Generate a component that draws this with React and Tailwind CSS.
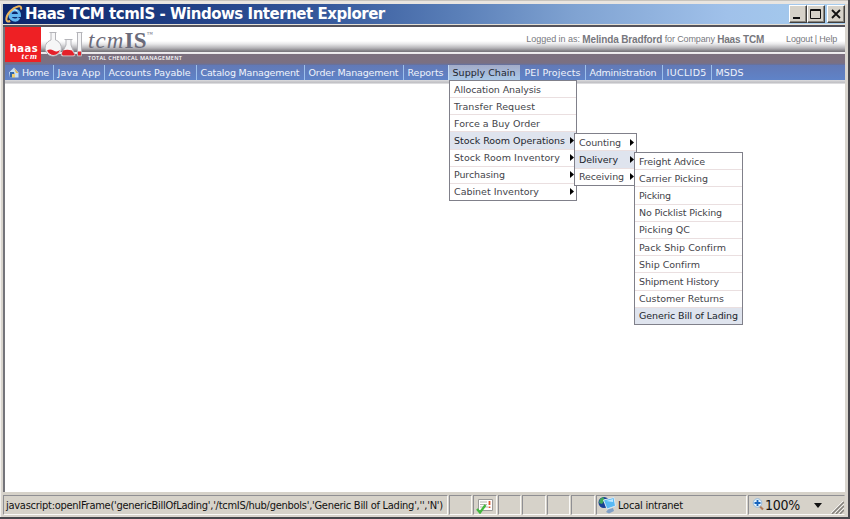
import { useLayoutEffect, useRef } from "react";

// Single-line label whose letter spacing is computed so that it fills a given width.
function Fit({ w, className = "", children }) {
  const ref = useRef(null);
  useLayoutEffect(() => {
    const el = ref.current;
    el.style.letterSpacing = "0px";
    const natural = el.getBoundingClientRect().width;
    el.style.letterSpacing = (w - natural) / (el.textContent.length - 0.5) + "px";
  }, [w]);
  return (
    <span ref={ref} className={"inline-block shrink-0 whitespace-pre " + className}>
      {children}
    </span>
  );
}

const nav = [
  ["Java App", 43, "w-[51px]"],
  ["Accounts Payable", 82, "w-[92px]"],
  ["Catalog Management", 99, "w-[108px]"],
  ["Order Management", 90, "w-[99px]"],
  ["Reports", 36, "w-[45px]"],
  ["Supply Chain", 63, "w-[72px]"],
  ["PEI Projects", 56, "w-[65px]"],
  ["Administration", 67, "w-[77px]"],
  ["IUCLID5", 40, "w-[49px]"],
  ["MSDS", 28, "w-[60px]"],
];

const menu = [
  ["Allocation Analysis", 87],
  ["Transfer Request", 81],
  ["Force a Buy Order", 86],
  ["Stock Room Operations", 111, true, true],
  ["Stock Room Inventory", 106, true],
  ["Purchasing", 51, true],
  ["Cabinet Inventory", 85, true],
];
const stock = [
  ["Counting", 42, true],
  ["Delivery", 39, true, true],
  ["Receiving", 45, true],
];
const delivery = [
  ["Freight Advice", 66],
  ["Carrier Picking", 69],
  ["Picking", 32],
  ["No Picklist Picking", 83],
  ["Picking QC", 51],
  ["Pack Ship Confirm", 87],
  ["Ship Confirm", 61],
  ["Shipment History", 80],
  ["Customer Returns", 85],
  ["Generic Bill of Lading", 99, false, true],
];

function Menu({ items, className }) {
  return (
    <div className={"absolute flex flex-col border border-[#80808a] bg-white " + className}>
      {items.map(([t, w, arrow, on], i) => (
        <div
          key={t}
          className={
            "flex min-h-0 flex-1 items-center justify-between pl-1 pr-[2px] text-[9.5px] leading-[16px] " +
            (i < items.length - 1 ? "border-b border-[#eadfe0] " : "") +
            (on ? "bg-[#dfe4ee] text-[#22242c]" : "text-[#44444a]")
          }
        >
          <Fit w={w} className="pt-[1px]">{t}</Fit>
          {arrow && (
            <svg className="h-[7px] w-[4px] shrink-0" viewBox="0 0 4 7">
              <path d="M0 0L4 3.5L0 7Z" fill="#000" />
            </svg>
          )}
        </div>
      ))}
    </div>
  );
}

const bevel =
  "flex h-[18px] shrink-0 items-center border border-t-[#fff] border-l-[#fff] border-r-[#404040] border-b-[#404040] bg-[#d6d2c9] shadow-[inset_-1px_-1px_0_#8a867e] ";
const pane =
  "flex h-[20px] shrink-0 items-center border border-t-[#8f8f93] border-l-[#8f8f93] border-r-[#faf9f7] border-b-[#faf9f7] ";

function TitleBar() {
  return (
    <div className="flex h-[20px] items-center bg-[linear-gradient(90deg,#0c266b_0%,#1c3a80_18%,#35589b_38%,#5a7fb8_54%,#80a3d2_68%,#a0c1ea_86%,#a6cdee_100%)]">
      <svg className="ml-[2px] h-[19px] w-[18px]" viewBox="0 0 18 19">
        <path d="M5 10.5H14.5C14.8 4 6.2 3 5 9.5C4.5 15 11.5 17 14 12.8" fill="none" stroke="#62b5ee" strokeWidth="3" />
        <path d="M7 5.4Q10 3.5 12.5 6" fill="none" stroke="#c8edff" strokeWidth="1" />
        <path d="M16 4.5C17.5-.8 10 1 5 6.5C0 12 .2 18.6 5.2 16" fill="none" stroke="#eeb65c" strokeWidth="2" />
      </svg>
      <Fit w={360} className="ml-[2px] font-['DejaVu_Sans',sans-serif] text-[15px] font-bold leading-[20px] text-white">
        Haas TCM tcmIS - Windows Internet Explorer
      </Fit>
      <div className="ml-auto flex">
        <div className={bevel + "w-[18px]"}>
          <svg viewBox="0 0 16 16" className="h-4 w-4"><path d="M3 12h7" stroke="#111" strokeWidth="2" /></svg>
        </div>
        <div className={bevel + "w-[18px]"}>
          <svg viewBox="0 0 16 16" className="h-4 w-4"><path d="M2.5 3.5h10v9h-10zM2.5 4.5h10" fill="none" stroke="#111" /></svg>
        </div>
        <div className={bevel + "ml-[2px] w-[18px]"}>
          <svg viewBox="0 0 16 16" className="h-4 w-4"><path d="M4 4L12 12M12 4L4 12" stroke="#111" strokeWidth="1.8" /></svg>
        </div>
      </div>
    </div>
  );
}

function Flasks() {
  return (
    <svg className="mt-[4px] h-[30px] w-[38px] shrink-0" viewBox="0 0 38 30">
      <g fill="#f6f6f7" stroke="#b4b4b9" strokeWidth="1">
        <path d="M4.500 1.500h7M6 1.500V9C1 11 -.5 15 .5 19C1.500 23 5 25 8 25S15 23 16.200 19C17 14 14 10 10.500 9V1.500" />
        <path d="M19.500 8.500h8M21 9v5L16.500 23q-1 2 1 2h11q2 0 1-2L26 14V9" />
        <path d="M31.500 1.500h6M32.500 1.500V25h4V1.500" />
      </g>
      <path d="M2 19.500Q5 17.500 8.500 19.500T15 19C13 25.500 4.500 25.500 2 19.500Z" fill="#e5202a" />
      <path d="M18 19.500Q22 18 27 19.500L29.500 23.500Q29 24.500 28 24.500H18Q16 24 18 19.500Z" fill="#e5202a" />
      <path d="M33 20.500h3V24.500h-3z" fill="#e5202a" />
    </svg>
  );
}

function Header() {
  return (
    <div className="flex h-[38px] bg-[linear-gradient(180deg,#fff_0px,#fff_14px,#e8e8ea_17px,#b5b4b8_21px,#807d83_24px,#77727a_25px,#f0eff0_25px,#e8e6e9_27px,#7c707e_27px,#7b7082_36px,#6272a4_38px)] font-['Liberation_Sans',sans-serif]">
      <div className="flex h-[35px] w-[36px] shrink-0 flex-col items-end bg-[#ee2024] pr-[3px] pt-[17px] text-white">
        <Fit w={28} className="font-['DejaVu_Sans',sans-serif] text-[10px] font-bold leading-[9px]">haas</Fit>
        <Fit w={16} className="font-['Liberation_Serif',serif] text-[9px] font-bold italic leading-[6px]">tcm</Fit>
      </div>
      <div className="w-[4px]" />
      <Flasks />
      <div className="ml-[5px] flex flex-col">
        <div className="flex h-[27px] items-start pt-[1px] font-['Liberation_Serif',serif] leading-[26px] text-[#6b6b7a]">
          <Fit w={36} className="text-[23px] italic">tcm</Fit>
          <Fit w={22} className="text-[23px] font-bold">IS</Fit>
          <span className="text-[6px] leading-[13px]">™</span>
        </div>
        <Fit w={94} className="font-['Open_Sans',sans-serif] text-[5.5px] font-semibold leading-[9px] text-white">
          TOTAL CHEMICAL MANAGEMENT
        </Fit>
      </div>
      <div className="ml-auto flex pr-[8px] text-[10px] leading-[25px] text-[#77777d]">
        <Fit w={56} className="text-[9px]">Logged in as: </Fit>
        <Fit w={80} className="font-bold">Melinda Bradford</Fit>
        <Fit w={55} className="text-[9px]"> for Company </Fit>
        <Fit w={47} className="font-bold">Haas TCM</Fit>
        <Fit w={51} className="ml-[22px] text-[9px]">Logout | Help</Fit>
      </div>
    </div>
  );
}

function NavBar() {
  return (
    <div className="flex h-[15px] bg-[linear-gradient(180deg,#6279b6,#5f83c8)] text-[9.5px] leading-[15px] text-[#eef3fc]">
      <div className="flex w-[48px] shrink-0">
        <svg className="ml-[3px] mt-[2px] h-[11px] w-[11px]" viewBox="0 0 11 11">
          <path d="M1 5.500L6 .500L10.500 5.500V10.500H2Z" fill="#c8e0f4" />
          <path d="M6 1L10.500 6H8Z" fill="#e8b84c" />
          <path d="M2 5h4l1 5.500H2z" fill="#3568a8" />
          <path d="M4 7h3v3.500H4z" fill="#f2cf70" />
        </svg>
        <Fit w={27} className="ml-[3px]">Home</Fit>
      </div>
      {nav.map(([t, w, width]) => (
        <div
          key={t}
          className={
            "shrink-0 border-l pl-[3.5px] " + width +
            (t === "Supply Chain"
              ? " border-[#c4dcf4] bg-[linear-gradient(180deg,#a3abc8,#a9c8e8)] text-[#20242e]"
              : t === "PEI Projects" ? " border-transparent" : " border-[#9dc0ec]")
          }
        >
          <Fit w={w}>{t}</Fit>
        </div>
      ))}
    </div>
  );
}

function StatusBar() {
  return (
    <div className="flex h-[24px] items-center gap-[1px] bg-[#d6d2c9] pt-[2px] font-['DejaVu_Sans_Condensed','DejaVu_Sans',sans-serif] text-[11px] text-[#111] [font-stretch:condensed]">
      <div className={pane + "w-[445px] pl-[2px]"}>
        <Fit w={437} className="pt-[2px]">javascript:openIFrame('genericBillOfLading','/tcmIS/hub/genbols','Generic Bill of Lading','','N')</Fit>
      </div>
      <div className={pane + "w-[23px]"} />
      <div className={pane + "w-[24px] justify-center"}>
        <svg className="h-[17px] w-[18px]" viewBox="0 0 18 17">
          <path d="M2.500 2.500h14v11h-14z" fill="#fff" stroke="#9a9a98" />
          <path d="M4 5h7M4 7.500h7M4 10h8" stroke="#b5b5b0" />
          <path d="M13.500 4v4M13.500 9.500v1.500" stroke="#d8562c" strokeWidth="1.800" />
          <path d="M1 12l3 3.500L9.500 8" fill="none" stroke="#42b83e" strokeWidth="2.300" />
        </svg>
      </div>
      <div className={pane + "w-[23px]"} />
      <div className={pane + "w-[24px]"} />
      <div className={pane + "w-[23px]"} />
      <div className={pane + "w-[24px]"} />
      <div className={pane + "w-[151px] pl-[1px]"}>
        <svg className="h-[18px] w-[18px]" viewBox="0 0 18 18">
          <circle cx="6" cy="6.500" r="5.500" fill="#183f96" />
          <path d="M2 3l3-2 2 3-3 4-3-1z" fill="#3fa65a" />
          <path d="M5.500 4L16 1.500L17.500 10L9 13Z" fill="#58b9f4" stroke="#dbe8f2" />
          <path d="M8 5l7-2v3z" fill="#bfe8ff" />
          <path d="M10 13.500l5-1.500 1 3-5 2.500-3-1.500z" fill="#7f9fc6" />
        </svg>
        <Fit w={65} className="ml-[2px] pt-[2px]">Local intranet</Fit>
      </div>
      <div className={pane + "w-[97px] border-r-transparent pl-[3px]"}>
        <svg className="mb-[2px] h-[13px] w-[13px]" viewBox="0 0 13 13">
          <path d="M7 7.500l4 4" stroke="#b07a58" strokeWidth="2" />
          <circle cx="5.500" cy="5" r="4.300" fill="#e4f2fc" stroke="#94b9da" />
          <path d="M5.500 2v6M2.500 5h6" stroke="#1764bd" strokeWidth="1.800" />
        </svg>
        <Fit w={35} className="text-[14px]">100%</Fit>
        <svg className="ml-[14px] h-[5px] w-[8px]" viewBox="0 0 8 5"><path d="M0 0h8L4 5z" fill="#111" /></svg>
        <svg className="ml-auto mt-[5px] h-[13px] w-[13px] shrink-0" viewBox="0 0 13 13">
          <path d="M1 13L13 1M5 13L13 5M9 13L13 9" stroke="#85827d" strokeWidth="1.500" />
          <path d="M0 12L12 0M4 12L13 3M8 12L13 7" stroke="#fff" strokeWidth=".7" />
        </svg>
      </div>
    </div>
  );
}

export default function App() {
  return (
    <div className="relative flex h-[519px] w-[850px] flex-col overflow-hidden border-b-2 border-r-2 border-[#48474c] bg-[#d9d5ce] font-['DejaVu_Sans',sans-serif]">
      <div className="h-[4px] shrink-0 border-t border-[#c8c4bd] bg-[#e9e5e0]" />
      <div className="flex min-h-0 flex-1 flex-col border-l border-[#f4f2ef] pl-[2px] pr-[3px]">
        <TitleBar />
        <div className="h-[3px] shrink-0 border-t border-[#e4dfd5] bg-[#55535b]" />
        <div className="flex h-[465px] shrink-0 flex-col border-l-2 border-[#74747a] bg-white">
          <Header />
          <NavBar />
          <div className="h-[4px] shrink-0 bg-[linear-gradient(180deg,#dcdcdf,#c0c0c4_60%,#e8e8ea)]" />
        </div>
        <StatusBar />
      </div>
      <Menu items={menu} className="left-[449px] top-[80px] h-[121px] w-[128px]" />
      <Menu items={stock} className="left-[574px] top-[133px] h-[53px] w-[63px]" />
      <Menu items={delivery} className="left-[634px] top-[152px] h-[173px] w-[109px]" />
    </div>
  );
}
